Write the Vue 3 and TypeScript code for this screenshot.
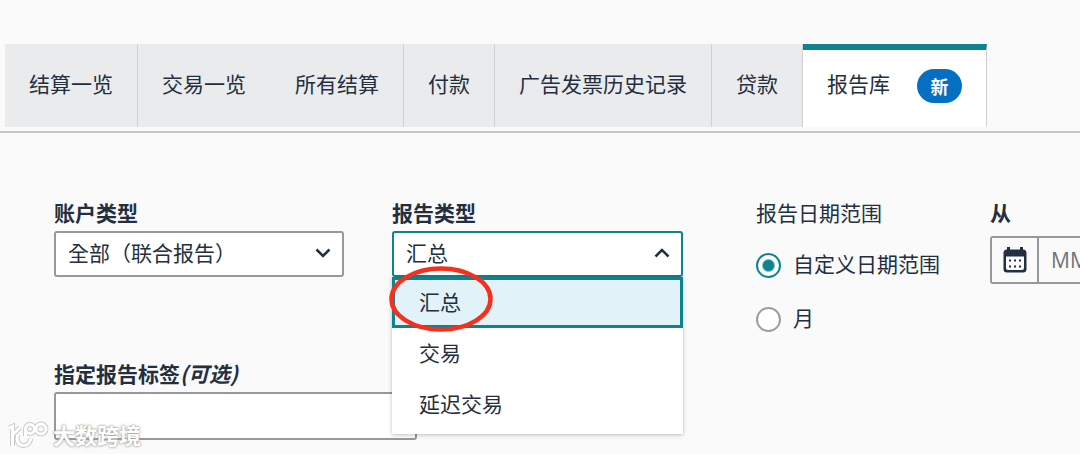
<script setup lang="ts">
import { ref } from 'vue'

interface Tab {
  label: string
  badge?: string
  joined?: boolean
}

const tabs: Tab[] = [
  { label: '结算一览' },
  { label: '交易一览', joined: true },
  { label: '所有结算' },
  { label: '付款' },
  { label: '广告发票历史记录' },
  { label: '贷款' },
  { label: '报告库', badge: '新' },
]
const activeTab = ref('报告库')

const accountType = ref('全部（联合报告）')
const reportTypes = ['汇总', '交易', '延迟交易']
const reportType = ref('汇总')

const ranges = ['自定义日期范围', '月']
const range = ref('自定义日期范围')

const tag = ref('')
const fromDate = ref('')
</script>

<template>
  <div class="page">
    <nav class="tabs">
      <button
        v-for="t in tabs"
        :key="t.label"
        type="button"
        class="tab"
        :class="{ active: t.label === activeTab, joined: t.joined }"
        @click="activeTab = t.label"
      >
        {{ t.label }}
        <span v-if="t.badge" class="badge">{{ t.badge }}</span>
      </button>
    </nav>

    <form class="form" @submit.prevent>
      <div class="field">
        <label class="label" for="account">账户类型</label>
        <div class="select-wrap">
          <select id="account" v-model="accountType" class="control centred-marks" lang="zh-Hant">
            <option>全部（联合报告）</option>
          </select>
          <svg class="chevron" viewBox="0 0 16 10" aria-hidden="true"><path d="M1.5 1.5 8 8l6.500-6.500" /></svg>
        </div>
      </div>

      <div class="field">
        <label class="label" for="report">报告类型</label>
        <div class="select-wrap">
          <select id="report" v-model="reportType" class="control open">
            <option v-for="r in reportTypes" :key="r">{{ r }}</option>
          </select>
          <svg class="chevron" viewBox="0 0 16 10" aria-hidden="true"><path d="M1.500 8.500 8 2l6.500 6.500" /></svg>
          <ul class="menu" role="listbox" aria-label="报告类型">
            <li
              v-for="r in reportTypes"
              :key="r"
              role="option"
              class="item"
              :class="{ selected: r === reportType }"
              :aria-selected="r === reportType"
              @click="reportType = r"
            >{{ r }}</li>
          </ul>
          <svg class="ring" viewBox="0 0 104 66" aria-hidden="true"><ellipse cx="52" cy="33" rx="49.500" ry="30.500" /></svg>
        </div>
      </div>

      <fieldset class="ranges">
        <legend class="label plain">报告日期范围</legend>
        <label v-for="r in ranges" :key="r" class="radio">
          <input v-model="range" type="radio" name="range" :value="r" />
          <span>{{ r }}</span>
        </label>
      </fieldset>

      <div class="field">
        <label class="label" for="from">从</label>
        <div class="date">
          <button type="button" class="cal" aria-label="日历">
            <svg viewBox="0 0 24 26" aria-hidden="true">
              <path class="solid" d="M4 2.500h16a3.500 3.500 0 0 1 3.500 3.500v16a3.500 3.500 0 0 1-3.500 3.500H4A3.500 3.500 0 0 1 .5 22V6A3.500 3.500 0 0 1 4 2.500Z" />
              <path class="solid" d="M4 0h3v4H4zM17 0h3v4h-3z" />
              <path class="paper" d="M3 9.500h18V21a2 2 0 0 1-2 2H5a2 2 0 0 1-2-2Z" />
              <path class="solid" d="M6 12.500h2v2H6zM11 12.500h2v2h-2zM16 12.500h2v2h-2zM6 18.500h2v2H6zM11 18.500h2v2h-2zM16 18.500h2v2h-2z" />
            </svg>
          </button>
          <input id="from" v-model="fromDate" type="text" class="date-input" placeholder="MM/DD/YYYY" />
        </div>
      </div>

      <div class="field tag">
        <label class="label" for="tag">指定报告标签<em>(可选)</em></label>
        <input id="tag" v-model="tag" type="text" class="control tall" />
      </div>
    </form>

    <div class="watermark">
      <svg viewBox="0 0 40 28" aria-hidden="true">
        <g v-for="layer in ['halo', 'mark']" :key="layer" :class="layer">
          <path d="M1.500 6 4.500 4.500V24M4.500 13 12 5.500M9.500 13c-1.500 7 1.500 10.500 6 10.500 4 0 6.500-3 7.500-7" />
          <path d="M17.500 14V7" />
          <circle cx="22" cy="7" r="4.500" />
          <circle cx="33" cy="7" r="5" />
        </g>
      </svg>
      <span>大数跨境</span>
    </div>
  </div>
</template>

<style>
body {
  margin: 0;
  background: #fafafa;
}
</style>

<style scoped>
.page {
  position: relative;
  box-sizing: border-box;
  min-height: 100vh;
  overflow: hidden;
  padding-top: 44px;
  background: #fafafa;
  color: #232f3e;
  font: 21px/28px "Noto Sans CJK SC", sans-serif;
}
button,
input,
select {
  box-sizing: border-box;
  margin: 0;
  font: inherit;
  color: inherit;
}
.tabs {
  display: flex;
  padding: 0 5px 4px;
  border-bottom: 2px solid #c6c7c8;
}
.tab {
  display: flex;
  flex: none;
  align-items: center;
  height: 83px;
  padding: 0 24px 5px;
  border: 0;
  border-right: 1px solid #cfd1d3;
  background: #eaebec;
  white-space: nowrap;
}
.tab.joined {
  border-right-color: #eaebec;
}
.tab.active {
  gap: 27px;
  border-top: 6px solid #0d8390;
  padding-bottom: 11px;
  background: #fff;
}
.badge {
  width: 45px;
  margin-top: 5px;
  border-radius: 17px;
  background: #0470c4;
  color: #fff;
  font-size: 18px;
  font-weight: 700;
  line-height: 34px;
}
.form {
  display: grid;
  grid-template-columns: 290px 291px 211px 291px;
  column-gap: 48px;
  row-gap: 28px;
  align-items: start;
  padding: 67px 0 13px 54px;
}
.field {
  display: flex;
  flex-direction: column;
}
.label {
  padding: 0 0 4px;
  font-weight: 700;
  line-height: 24px;
}
.label.plain {
  font-weight: 400;
}
.select-wrap {
  position: relative;
  margin-top: 3px;
}
.control {
  display: block;
  appearance: none;
  width: 100%;
  height: 46px;
  padding: 0 44px 5px 12px;
  border: 2px solid #95999c;
  border-radius: 3px;
  background: #fff;
  outline: 0;
}
.centred-marks {
  font-family: "Noto Sans CJK TC", sans-serif;
}
.control.open {
  border-color: #0d8390;
}
.control.tall {
  height: 48px;
  margin-top: 3px;
}
.chevron {
  position: absolute;
  right: 13px;
  top: 17px;
  width: 16px;
  height: 10px;
  fill: none;
  stroke: #232f3e;
  stroke-width: 2.5;
  pointer-events: none;
}
.menu {
  position: absolute;
  z-index: 2;
  top: 100%;
  left: 0;
  right: 0;
  margin: 0;
  padding: 0 0 4px;
  background: #fff;
  box-shadow: 0 1px 4px rgba(0, 0, 0, 0.25);
  list-style: none;
}
.item {
  box-sizing: border-box;
  height: 51px;
  padding: 0 24px;
  border: 3px solid transparent;
  line-height: 42px;
}
.item.selected {
  border-color: #0d8390;
  background: #e1f3f8;
}
.ring {
  position: absolute;
  z-index: 3;
  left: -3px;
  top: 35px;
  width: 104px;
  height: 66px;
  fill: none;
  stroke: #f5301c;
  stroke-width: 4.5;
  pointer-events: none;
}
.ranges {
  display: flex;
  flex-direction: column;
  gap: 26px;
  min-width: 0;
  margin: 0 0 0 25px;
  padding: 23px 0 0;
  border: 0;
  white-space: nowrap;
}
.radio {
  display: flex;
  align-items: center;
  gap: 12px;
}
.radio span {
  padding-bottom: 4px;
  line-height: 24px;
}
.radio input {
  flex: none;
  appearance: none;
  width: 25px;
  height: 25px;
  border: 2px solid #999da0;
  border-radius: 50%;
  background: #fff;
}
.radio input:checked {
  border-color: #0d8390;
  background: radial-gradient(circle, #0d8390 5px, #fff 7px);
}
.date {
  display: flex;
  height: 48px;
  box-sizing: border-box;
  margin-top: 8px;
  border: 2px solid #95999c;
  border-radius: 3px;
}
.cal {
  display: grid;
  flex: none;
  place-items: center;
  width: 47px;
  padding: 0;
  border: 0;
  border-right: 2px solid #95999c;
  background: #fafafa;
}
.cal svg {
  width: 24px;
  height: 26px;
}
.solid {
  fill: #232f3e;
}
.paper {
  fill: #fafafa;
}
.date-input {
  flex: 1;
  min-width: 0;
  padding: 0 12px;
  border: 0;
  background: #fafafa;
  font-family: "Open Sans", sans-serif;
}
.date-input::placeholder {
  color: #6f7377;
  opacity: 1;
}
.tag {
  grid-column: 1 / 3;
  width: 363px;
}
.watermark {
  position: absolute;
  left: 8px;
  bottom: 4px;
  z-index: 4;
  display: flex;
  align-items: center;
  gap: 5px;
  color: #fff;
  font-size: 22px;
  font-weight: 700;
  text-shadow: 0 0 2px #999, 0 0 3px #aaa;
  pointer-events: none;
}
.watermark span {
  padding-bottom: 4px;
  line-height: 24px;
}
.watermark svg {
  width: 40px;
  height: 28px;
  overflow: visible;
  fill: none;
}
.halo {
  stroke: #c9cacb;
  stroke-width: 5;
}
.mark {
  stroke: #fff;
  stroke-width: 3;
}
</style>
